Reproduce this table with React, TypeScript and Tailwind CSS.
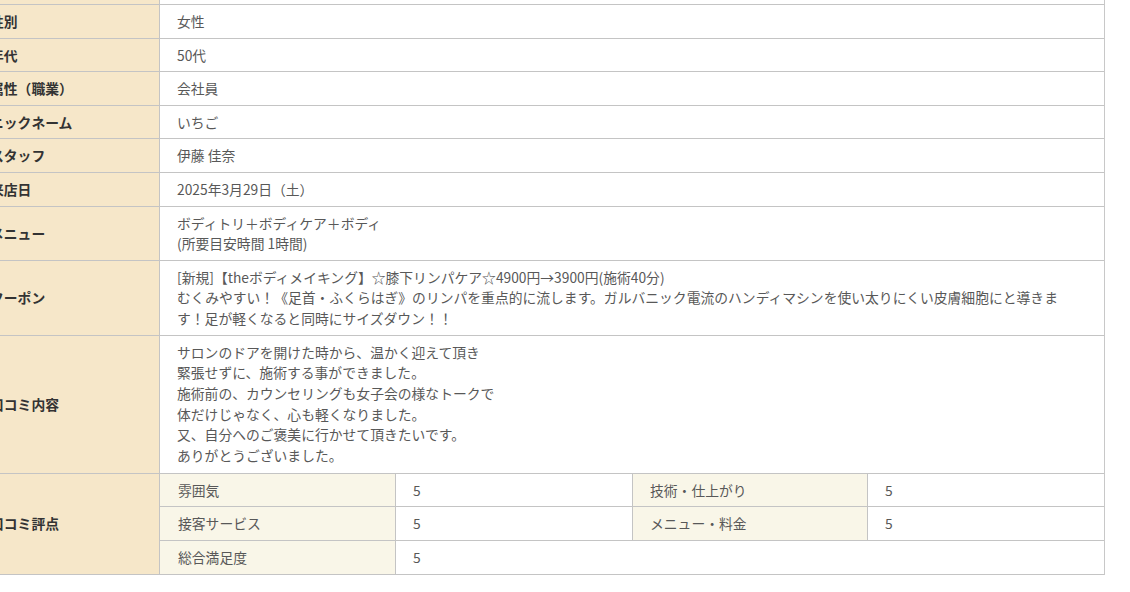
import React from "react";

const font = {
  fontFamily: '"Noto Sans CJK JP", "Noto Sans", sans-serif',
};

function Row({ label, children }: { label: string; children: React.ReactNode }) {
  return (
    <div className="flex border-b border-[#c4c4c4]">
      <div className="w-[180px] shrink-0 bg-[#f6e7c9] border-r border-[#c4c4c4] pl-[10px] flex items-center font-bold text-[#333]">
        {label}
      </div>
      <div className="flex-1 bg-white pl-[17px] pr-[17px] py-[6px] text-[#585858]">{children}</div>
    </div>
  );
}

export default function App() {
  return (
    <div className="w-[1130px] h-[592px] bg-white overflow-hidden" style={font}>
      <div className="ml-[-20px] w-[1125px] border-r border-[#c8c8c8] text-[13.8px] leading-[20.6px]">
        <div className="flex border-b border-[#c4c4c4] h-[5px]">
          <div className="w-[180px] shrink-0 bg-[#f6e7c9] border-r border-[#c4c4c4]" />
          <div className="flex-1 bg-white" />
        </div>
        <Row label="性別">女性</Row>
        <Row label="年代">50代</Row>
        <Row label="属性（職業）">会社員</Row>
        <Row label="ニックネーム">いちご</Row>
        <Row label="スタッフ">伊藤 佳奈</Row>
        <Row label="来店日">2025年3月29日（土）</Row>
        <Row label="メニュー">
          ボディトリ＋ボディケア＋ボディ
          <br />
          (所要目安時間 1時間)
        </Row>
        <Row label="クーポン">
          [新規]【theボディメイキング】☆膝下リンパケア☆4900円→3900円(施術40分)
          <br />
          むくみやすい！《足首・ふくらはぎ》のリンパを重点的に流します。ガルバニック電流のハンディマシンを使い太りにくい皮膚細胞にと導きま
          <br />
          す！足が軽くなると同時にサイズダウン！！
        </Row>
        <div className="flex border-b border-[#c4c4c4]">
          <div className="w-[180px] shrink-0 bg-[#f6e7c9] border-r border-[#c4c4c4] pl-[10px] flex items-center font-bold text-[#333]">
            口コミ内容
          </div>
          <div className="flex-1 bg-white pl-[17px] pr-[17px] pt-[6px] pb-[7px] text-[#585858] leading-[20.7px]">
            サロンのドアを開けた時から、温かく迎えて頂き
            <br />
            緊張せずに、施術する事ができました。
            <br />
            施術前の、カウンセリングも女子会の様なトークで
            <br />
            体だけじゃなく、心も軽くなりました。
            <br />
            又、自分へのご褒美に行かせて頂きたいです。
            <br />
            ありがとうございました。
          </div>
        </div>
        <div className="flex">
          <div className="w-[180px] shrink-0 bg-[#f6e7c9] border-r border-b border-[#c4c4c4] pl-[10px] flex items-center font-bold text-[#333]">
            口コミ評点
          </div>
          <div className="flex-1 flex flex-col text-[#585858]">
            <div className="flex border-b border-[#c4c4c4]">
              <div className="w-[236px] shrink-0 bg-[#f9f6e8] border-r border-[#c4c4c4] pl-[18px] py-[6px]">雰囲気</div>
              <div className="w-[237px] shrink-0 bg-white border-r border-[#c4c4c4] pl-[17px] py-[6px]">5</div>
              <div className="w-[235px] shrink-0 bg-[#f9f6e8] border-r border-[#c4c4c4] pl-[17px] py-[6px]">技術・仕上がり</div>
              <div className="flex-1 bg-white pl-[17px] py-[6px]">5</div>
            </div>
            <div className="flex border-b border-[#c4c4c4]">
              <div className="w-[236px] shrink-0 bg-[#f9f6e8] border-r border-[#c4c4c4] pl-[18px] py-[6px]">接客サービス</div>
              <div className="w-[237px] shrink-0 bg-white border-r border-[#c4c4c4] pl-[17px] py-[6px]">5</div>
              <div className="w-[235px] shrink-0 bg-[#f9f6e8] border-r border-[#c4c4c4] pl-[17px] py-[6px]">メニュー・料金</div>
              <div className="flex-1 bg-white pl-[17px] py-[6px]">5</div>
            </div>
            <div className="flex border-b border-[#c4c4c4]">
              <div className="w-[236px] shrink-0 bg-[#f9f6e8] border-r border-[#c4c4c4] pl-[18px] py-[6px]">総合満足度</div>
              <div className="flex-1 bg-white pl-[17px] py-[6px]">5</div>
            </div>
          </div>
        </div>
      </div>
    </div>
  );
}
